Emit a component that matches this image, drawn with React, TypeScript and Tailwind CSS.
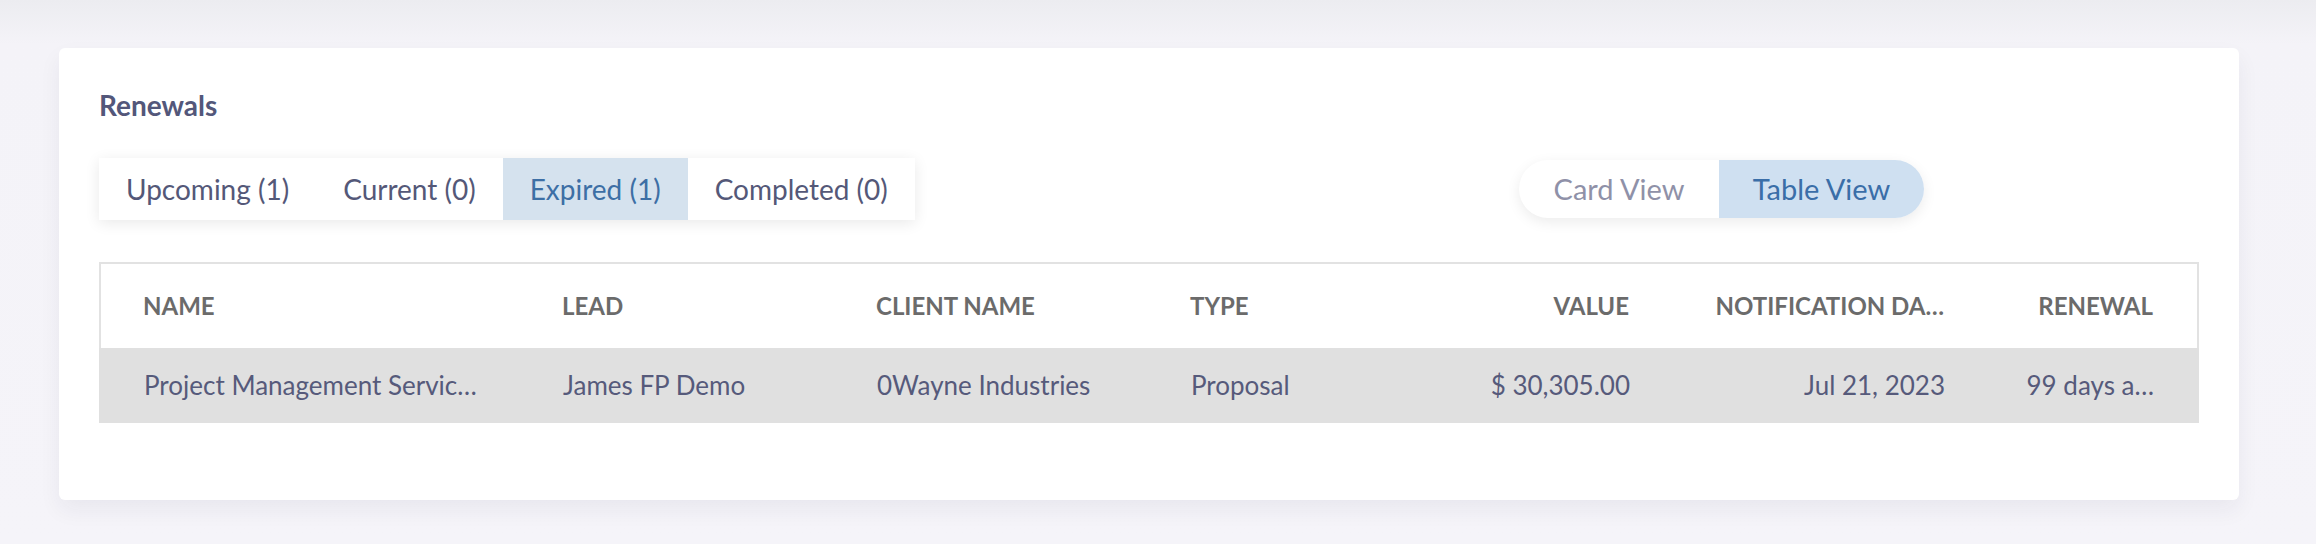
import { useState } from "react";

const tabs = [
  { key: "upcoming", label: "Upcoming (1)" },
  { key: "current", label: "Current (0)" },
  { key: "expired", label: "Expired (1)" },
  { key: "completed", label: "Completed (0)" },
];

const columns = [
  { label: "NAME", align: "left" },
  { label: "LEAD", align: "left" },
  { label: "CLIENT NAME", align: "left" },
  { label: "TYPE", align: "left" },
  { label: "VALUE", align: "right" },
  { label: "NOTIFICATION DA…", align: "right" },
  { label: "RENEWAL", align: "right" },
];

const rows = [
  [
    "Project Management Servic…",
    "James FP Demo",
    "0Wayne Industries",
    "Proposal",
    "$ 30,305.00",
    "Jul 21, 2023",
    "99 days a…",
  ],
];

const gridCols = "grid grid-cols-[419px_314px_314px_190px_249px_315px_209px]";

export default function App() {
  const [tab, setTab] = useState("expired");
  const [view, setView] = useState<"card" | "table">("table");

  return (
    <div
      className="min-h-[544px] bg-[linear-gradient(to_bottom,#ececf0,#f4f3f8_44px,#f5f4f9)] pt-[48px] pl-[59px] pr-[77px] pb-[44px]"
      style={{ fontFamily: "Lato, 'Open Sans', sans-serif" }}
    >
      <div className="rounded-[6px] bg-white px-[40px] pt-[40px] pb-[77px] shadow-[0_10px_22px_rgba(40,40,70,0.06)]">
        <h2 className="text-[28px] leading-[34px] font-bold text-[#53577a]">Renewals</h2>

        {/* tabs + view toggle */}
        <div className="mt-[36px] flex items-center justify-between">
          <div className="flex h-[62px] bg-white shadow-[0_3px_14px_rgba(0,0,0,0.09)]">
            {tabs.map((t) => (
              <button
                key={t.key}
                onClick={() => setTab(t.key)}
                className={
                  tab === t.key
                    ? "px-[27px] text-[28px] text-[#3d6fa5] bg-[#d5e2ee]"
                    : "px-[27px] text-[28px] text-[#545878]"
                }
              >
                {t.label}
              </button>
            ))}
          </div>

          <div className="mr-[275px] flex h-[58px] w-[405px] rounded-full bg-white shadow-[0_4px_14px_rgba(0,0,0,0.08)]">
            <button
              onClick={() => setView("card")}
              className={
                view === "card"
                  ? "w-[200px] rounded-l-full bg-[#cfe0f1] text-[29px] text-[#3a6ea8]"
                  : "w-[200px] rounded-l-full text-[29px] text-[#8f91a8]"
              }
            >
              Card View
            </button>
            <button
              onClick={() => setView("table")}
              className={
                view === "table"
                  ? "flex-1 rounded-r-full bg-[#cfe0f1] text-[29px] text-[#3a6ea8]"
                  : "flex-1 rounded-r-full text-[29px] text-[#8f91a8]"
              }
            >
              Table View
            </button>
          </div>
        </div>

        {/* table */}
        <div className="mt-[42px]">
          <div className={`${gridCols} h-[86px] items-center border-x-2 border-t-2 border-[#e2e2e2] pl-[42px] pr-[44px]`}>
            {columns.map((c) => (
              <div
                key={c.label}
                className={`text-[24px] font-bold text-[#6b6b6b] whitespace-nowrap ${c.align === "right" ? "text-right" : ""}`}
              >
                {c.label}
              </div>
            ))}
          </div>
          {rows.map((r, i) => (
            <div key={i} className={`${gridCols} h-[75px] items-center bg-[#e0e0e0] px-[45px]`}>
              {r.map((v, j) => (
                <div
                  key={j}
                  className={`text-[26px] text-[#565a7b] whitespace-nowrap ${columns[j].align === "right" ? "text-right" : ""}`}
                >
                  {v}
                </div>
              ))}
            </div>
          ))}
        </div>
      </div>
    </div>
  );
}
